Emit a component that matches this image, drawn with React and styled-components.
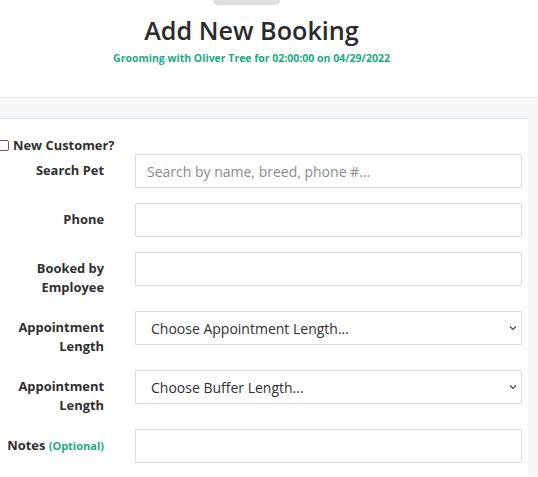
import React from 'react';
import styled, { createGlobalStyle } from 'styled-components';

const GlobalStyle = createGlobalStyle`
  html, body {
    margin: 0;
    padding: 0;
    background: #fff;
    font-family: "Open Sans", "Liberation Sans", sans-serif;
    overflow: hidden;
  }
  * { box-sizing: border-box; }
`;

const Page = styled.div`
  width: 538px;
  height: 477px;
  overflow: hidden;
`;

const Header = styled.header`
  height: 97px;
  display: flex;
  flex-direction: column;
  align-items: center;
  padding-right: 35px;
`;

const Pill = styled.div`
  width: 67px;
  height: 5px;
  margin-right: 10px;
  border-radius: 0 0 12px 12px;
  background: #dedede;
`;

const Title = styled.h1`
  margin: 10px 0 0;
  font-size: 25.2px;
  line-height: 30px;
  font-weight: 600;
  color: #2b2b2b;
`;

const Subtitle = styled.p`
  margin: 6px 0 0;
  font-size: 10.5px;
  line-height: 14px;
  font-weight: 700;
  color: #1ba985;
`;

const Body = styled.div`
  border-top: 1px solid #e2e3e5;
  background: #f7f8fa;
  padding-top: 20px;
  height: 380px;
`;

const Panel = styled.section`
  margin-left: -16px;
  width: 544px;
  height: 100%;
  background: #fff;
  border-top: 1px solid #e6e7e9;
  padding: 18px 6px 0 14px;
`;

const CheckRow = styled.label`
  display: flex;
  align-items: center;
  gap: 4px;
  height: 16px;
  margin-bottom: 1px;
  font-size: 12.9px;
  font-weight: 700;
  color: #2f2f2f;
`;

const Box = styled.span`
  width: 11px;
  height: 11px;
  border: 1px solid #5f5f5f;
  border-radius: 2px;
  background: #fff;
`;

const Row = styled.div`
  display: grid;
  grid-template-columns: 106px 1fr;
  column-gap: 31px;
  align-items: start;
  min-height: 35px;
  margin-bottom: 14px;
`;

const Label = styled.div`
  padding-top: 7px;
  text-align: right;
  font-size: 12.9px;
  line-height: 19px;
  font-weight: 700;
  color: #2f2f2f;
  white-space: nowrap;
`;

const Optional = styled.span`
  font-size: 11px;
  color: #1ba985;
`;

const fieldStyles = `
  width: 100%;
  height: 34px;
  border: 1px solid #dcdcdc;
  border-radius: 1px;
  background: #fff;
  font-family: "Open Sans", "Liberation Sans", sans-serif;
  font-size: 14px;
  outline: none;
`;

const Input = styled.input`
  ${fieldStyles}
  padding: 0 11px;
  color: #333;
  &::placeholder { color: #8a8a8a; }
`;

const SelectWrap = styled.div`
  position: relative;
`;

const Select = styled.select`
  ${fieldStyles}
  appearance: none;
  padding: 0 0 0 15px;
  color: #2f2f2f;
`;

const Chevron = styled.svg`
  position: absolute;
  right: 5px;
  top: 14px;
  pointer-events: none;
`;

function ChooseField({ text }) {
  return (
    <SelectWrap>
      <Select defaultValue="">
        <option value="">{text}</option>
      </Select>
      <Chevron width="8" height="6" viewBox="0 0 8 6">
        <path d="M1 1.5 L4 4.5 L7 1.5" fill="none" stroke="#444" strokeWidth="1.2" />
      </Chevron>
    </SelectWrap>
  );
}

export default function App() {
  return (
    <Page>
      <GlobalStyle />
      <Header>
        <Pill />
        <Title>Add New Booking</Title>
        <Subtitle>Grooming with Oliver Tree for 02:00:00 on 04/29/2022</Subtitle>
      </Header>
      <Body>
        <Panel>
          <CheckRow>
            <Box />
            New Customer?
          </CheckRow>
          <Row>
            <Label>Search Pet</Label>
            <Input placeholder="Search by name, breed, phone #..." />
          </Row>
          <Row>
            <Label>Phone</Label>
            <Input />
          </Row>
          <Row>
            <Label>Booked by<br />Employee</Label>
            <Input />
          </Row>
          <Row>
            <Label>Appointment<br />Length</Label>
            <ChooseField text="Choose Appointment Length..." />
          </Row>
          <Row>
            <Label>Appointment<br />Length</Label>
            <ChooseField text="Choose Buffer Length..." />
          </Row>
          <Row>
            <Label>Notes <Optional>(Optional)</Optional></Label>
            <Input />
          </Row>
        </Panel>
      </Body>
    </Page>
  );
}
